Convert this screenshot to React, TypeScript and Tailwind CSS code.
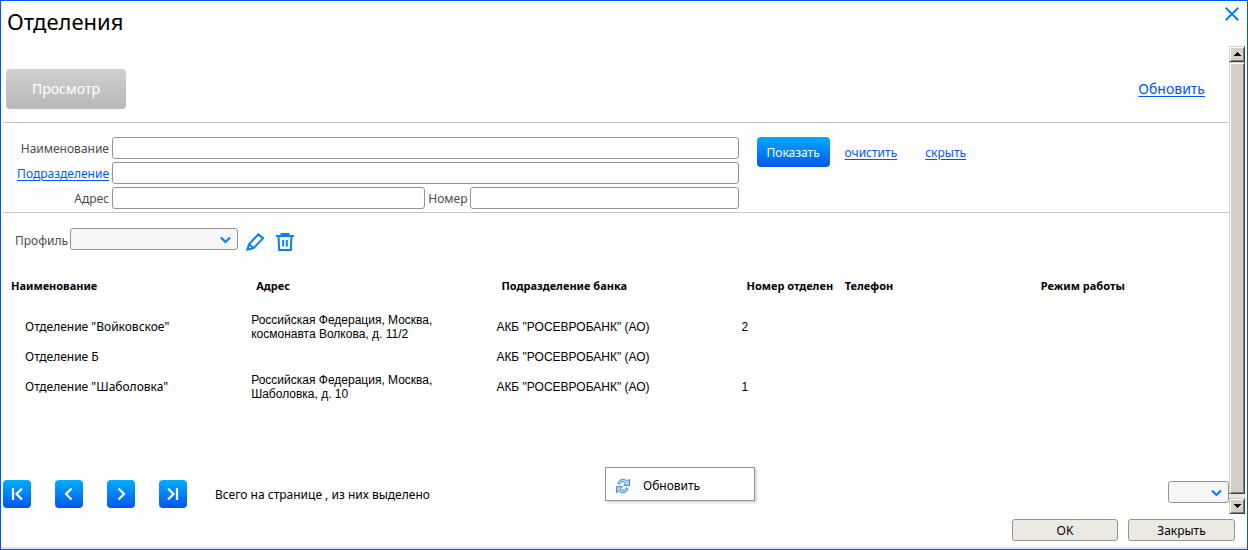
import React from "react";

const headers = [
  { title: "Наименование", width: "w-[20%]" },
  { title: "Адрес", width: "w-[20%]" },
  { title: "Подразделение банка", width: "w-[20%]" },
  { title: "Номер отделен", width: "w-[8%]" },
  { title: "Телефон", width: "w-[16%]" },
  { title: "Режим работы", width: "w-[16%]" },
];

const branches = [
  {
    name: 'Отделение "Войковское"',
    address: "Российская Федерация, Москва, космонавта Волкова, д. 11/2",
    bank: 'АКБ "РОСЕВРОБАНК" (АО)',
    number: "2",
  },
  {
    name: "Отделение Б",
    address: "",
    bank: 'АКБ "РОСЕВРОБАНК" (АО)',
    number: "",
  },
  {
    name: 'Отделение "Шаболовка"',
    address: "Российская Федерация, Москва, Шаболовка, д. 10",
    bank: 'АКБ "РОСЕВРОБАНК" (АО)',
    number: "1",
  },
];

const inputClass =
  "block h-[22px] w-full min-w-0 rounded-[3px] border border-[#949494] bg-white px-1 text-xs outline-none";

const linkClass = "text-[#0055ff] underline underline-offset-2";

const Select = ({ id, label, className }: { id: string; label: string; className: string }) => (
  <div className={`relative h-[22px] ${className}`}>
    <select
      id={id}
      aria-label={label}
      className="block h-full w-full appearance-none rounded-[3px] border border-[#949494] bg-[#f6f6f6] outline-none"
    />
    <svg
      className="pointer-events-none absolute right-[7px] top-2"
      width="11"
      height="8"
      viewBox="0 0 11 8"
      fill="none"
      stroke="#0a80f5"
      strokeWidth="2.2"
    >
      <path d="M1 1.5 5.5 6 10 1.5" />
    </svg>
  </div>
);

const PageButton = ({ label, d }: { label: string; d: string }) => (
  <button
    aria-label={label}
    className="flex size-7 items-center justify-center rounded-[4px] bg-linear-to-b from-[#06abfb] to-[#0054ee]"
  >
    <svg width="28" height="28" viewBox="0 0 28 28" fill="none" stroke="#fff" strokeWidth="2.2">
      <path d={d} />
    </svg>
  </button>
);

const ArrowButton = ({ label, d }: { label: string; d: string }) => (
  <button
    aria-label={label}
    className="flex h-4 w-full shrink-0 items-center justify-center border border-t-[#d4d0c8] border-l-[#d4d0c8] border-r-[#404040] border-b-[#404040] bg-[#d4d0c8] shadow-[inset_1px_1px_#fff,inset_-1px_-1px_#808080]"
  >
    <svg width="7" height="4" viewBox="0 0 7 4" shapeRendering="crispEdges">
      <path d={d} />
    </svg>
  </button>
);

const ScrollBar = () => (
  <div className="flex w-4 shrink-0 flex-col bg-[repeating-conic-gradient(#d4d0c8_0_25%,#fff_0_50%)] bg-[length:2px_2px]">
    <ArrowButton label="Вверх" d="M3 0h1v1h1v1h1v1h1v1H0V3h1V2h1V1h1z" />
    <div className="mb-1 flex-1 border border-t-[#d4d0c8] border-l-[#d4d0c8] border-r-[#404040] border-b-[#404040] bg-[#d4d0c8] shadow-[inset_1px_1px_#fff,inset_-1px_-1px_#808080]" />
    <ArrowButton label="Вниз" d="M0 0h7v1H6v1H5v1H4v1H3V3H2V2H1V1H0z" />
  </div>
);

const RefreshIcon = () => (
  <svg width="16" height="16" viewBox="0 0 16 16" fill="#a5d8fa" stroke="#2f7fce" strokeWidth="0.9">
    <path d="M3 5.2C4 2.4 5.8 1.2 8.2 1.2c1.8 0 3 .7 4 1.8l2.3-1.6v6H8.6l2-2C9.9 4.5 9 3.9 8 3.9c-1.7 0-3 .8-3.5 2.6z" />
    <path d="M13 10.8c-1 2.8-2.8 4-5.2 4-1.8 0-3-.7-4-1.8l-2.3 1.6v-6h5.9l-2 2c.7.9 1.6 1.5 2.6 1.5 1.7 0 3-.8 3.5-2.6z" />
  </svg>
);

export default function App() {
  return (
    <div className="flex min-h-screen flex-col border border-[#0055ff] bg-white font-['Noto_Sans',sans-serif] text-xs text-black">
      <header className="flex h-[45px] items-start justify-between pl-[6px] pr-2">
        <h1 className="pt-1 text-[22px] leading-8">Отделения</h1>
        <button aria-label="Закрыть окно" className="mt-[6px]">
          <svg width="14" height="14" viewBox="0 0 14 14" fill="none" stroke="#0a80f5" strokeWidth="2">
            <path d="M.7.7l12.6 12.6M13.3.7.7 13.3" />
          </svg>
        </button>
      </header>

      <main className="flex flex-1 pl-[2px] pr-[2px]">
        <div className="flex min-w-0 flex-1 flex-col">
          <div className="flex items-center justify-between border-b border-[#c8c8c8] pt-[23px] pr-6 pb-[13px] pl-[3px]">
            <button
              disabled
              className="h-10 w-[120px] rounded-[4px] bg-linear-to-b from-[#d0d0d0] to-[#b8b8b8] text-sm text-white"
            >
              Просмотр
            </button>
            <a href="#" className={`text-sm ${linkClass}`}>
              Обновить
            </a>
          </div>

          <form className="flex border-b border-[#c8c8c8] pt-[14px] pb-[3px] text-[#4c4c4c]">
            <div className="grid w-3/5 grid-cols-[106px_1fr] items-center gap-[3px] text-right leading-5">
              <label htmlFor="name" className="pt-[2px]">
                Наименование
              </label>
              <input id="name" className={inputClass} />
              <a href="#" className={`pt-[2px] ${linkClass}`}>
                Подразделение
              </a>
              <input aria-label="Подразделение" className={inputClass} />
              <label htmlFor="address" className="pt-[2px]">
                Адрес
              </label>
              <div className="flex items-center gap-[3px]">
                <div className="w-1/2">
                  <input id="address" className={inputClass} />
                </div>
                <label htmlFor="number" className="pt-[2px]">
                  Номер
                </label>
                <div className="flex-1">
                  <input id="number" className={inputClass} />
                </div>
              </div>
            </div>
            <div className="flex h-[30px] items-center pl-[18px]">
              <button
                type="button"
                className="h-full w-[73px] rounded-[4px] bg-linear-to-b from-[#06abfb] to-[#0054ee] pt-[2px] text-white"
              >
                Показать
              </button>
              <a href="#" className={`ml-[15px] pt-[2px] ${linkClass}`}>
                очистить
              </a>
              <a href="#" className={`ml-7 pt-[2px] ${linkClass}`}>
                скрыть
              </a>
            </div>
          </form>

          <div className="flex items-start pt-[15px] pl-3">
            <label htmlFor="profile" className="mr-[2px] pt-[5px] text-[#4c4c4c]">
              Профиль
            </label>
            <Select id="profile" label="Профиль" className="w-[168px]" />
            <button aria-label="Изменить" className="mt-[5px] ml-2">
              <svg width="19" height="18" viewBox="0 0 19 18" fill="none" stroke="#0a80f5" strokeWidth="2">
                <path d="M1.4 16.6 3 11.2 12.3 1.4l4.8 3.8-9.6 9.9zM3 11.2l4.5 3.9" />
              </svg>
            </button>
            <button aria-label="Удалить" className="mt-[5px] ml-[11px]">
              <svg width="18" height="18" viewBox="0 0 18 18" fill="none" stroke="#0a80f5" strokeWidth="2">
                <path d="M0 3h18M5.5 3V1h7v2M2.5 3l.7 14h11.6l.7-14M7.2 7v6.5M10.8 7v6.5" />
              </svg>
            </button>
          </div>

          <table className="mt-[17px] w-full table-fixed border-collapse text-left">
            <thead>
              <tr className="h-11">
                {headers.map((h) => (
                  <th key={h.title} className={`${h.width} pb-2 pl-2 text-[11px] font-bold whitespace-nowrap`}>
                    {h.title}
                  </th>
                ))}
              </tr>
            </thead>
            <tbody className="font-['Liberation_Sans',sans-serif] leading-[14px]">
              {branches.map((b) => (
                <tr key={b.name} className="h-[30px]">
                  <td className="pl-[22px] font-['Noto_Sans',sans-serif]">{b.name}</td>
                  <td className="pl-[3px] pr-10">{b.address}</td>
                  <td className="pl-[3px]">{b.bank}</td>
                  <td className="pl-[3px]">{b.number}</td>
                  <td />
                  <td />
                </tr>
              ))}
            </tbody>
          </table>

          <div className="mt-auto flex items-center pb-[6px]">
            <div className="flex gap-6">
              <PageButton label="Первая страница" d="M10 8v12M19 8.5 13.5 14l5.5 5.5" />
              <PageButton label="Предыдущая страница" d="M16.5 8.5 11 14l5.5 5.5" />
              <PageButton label="Следующая страница" d="M11.5 8.5 17 14l-5.5 5.5" />
              <PageButton label="Последняя страница" d="M9 8.5 14.5 14 9 19.5M18 8v12" />
            </div>
            <span className="ml-7 pt-[2px]">Всего на странице , из них выделено</span>
            <Select id="page-size" label="Строк на странице" className="mb-1 ml-auto w-[61px]" />
          </div>
        </div>
        <ScrollBar />
      </main>

      <footer className="flex justify-end gap-[10px] border-b-2 border-[#dce4ee] pt-[5px] pr-3 pb-[6px]">
        <button className="h-[22px] w-[106px] rounded-[3px] border border-[#949494] bg-[#ece9e2] pt-[2px]">OK</button>
        <button className="h-[22px] w-[107px] rounded-[3px] border border-[#949494] bg-[#ece9e2] pt-[2px]">Закрыть</button>
      </footer>

      {/* context menu */}
      <div className="absolute top-[467px] left-[605px] w-[150px] border border-[#949494] bg-white shadow-[2px_2px_2px_rgba(0,0,0,0.15)]">
        <button className="flex h-8 w-full items-center gap-3 pt-[3px] pl-[9px]">
          <RefreshIcon />
          Обновить
        </button>
      </div>
    </div>
  );
}
